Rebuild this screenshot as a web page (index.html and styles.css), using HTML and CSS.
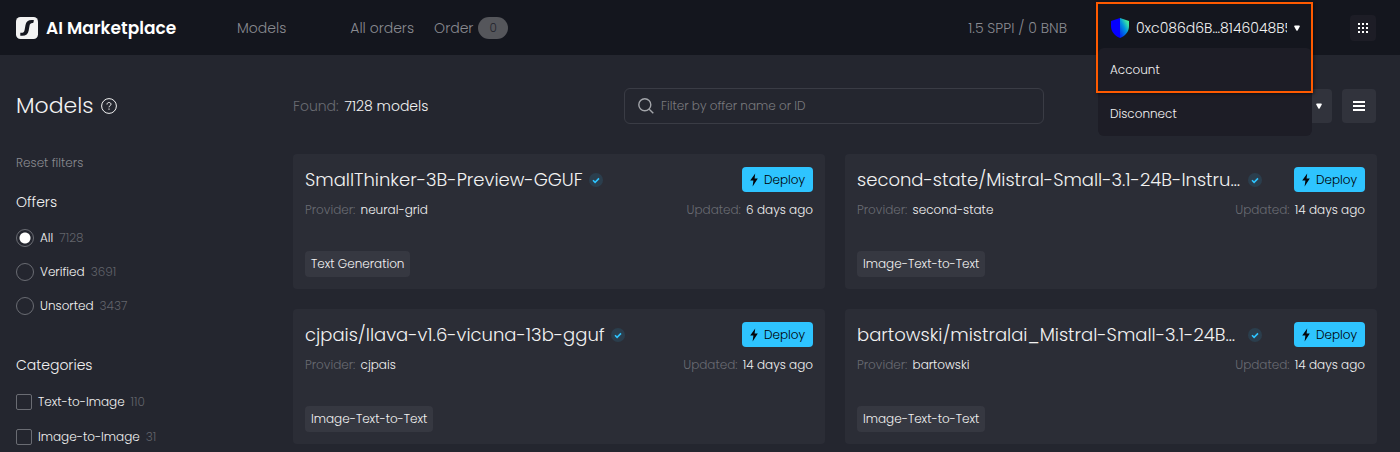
FILE: index.html
```
<!DOCTYPE html>
<html lang="en">
<head>
<meta charset="utf-8">
<title>AI Marketplace</title>
<link rel="stylesheet" href="styles.css">
</head>
<body>
<svg class="sprite" aria-hidden="true">
  <symbol id="check" viewBox="0 0 14 14"><circle cx="7" cy="7" r="7" fill="#2b3e4d"/><path d="M4 7.2l2.1 2.1L10 5.4" fill="none" stroke="#2ec4ff" stroke-width="1.6"/></symbol>
  <symbol id="bolt" viewBox="0 0 8 14"><path d="M5.2 0.4L0.2 7.6H3.4L2.6 13.6L7.8 5.6H4.6z" fill="#05070c"/></symbol>
  <symbol id="caret" viewBox="0 0 6 6"><path d="M1 0.5h4q1 0 .8 1L3.6 5.4q-.6.8-1.2 0L.2 1.500Q0 .5 1 .5z" fill="#fff"/></symbol>
</svg>
<header class="header">
  <a class="logo" href="#">
    <svg width="22" height="22" viewBox="0 0 22 22"><rect width="22" height="22" rx="4.500" fill="#f2f2f2"/><path d="M18 3.200C13 2.400 10.300 4 9.500 8L8.700 12.500C8.200 15.500 7 16 4.300 15.800V18.700C9.500 19.300 12 17.600 12.700 13.500L13.500 9C13.900 6.600 15 5.900 17.200 6.100Z" fill="#14161e"/></svg>
    <span>AI Marketplace</span>
  </a>
  <nav class="nav">
    <a class="nav-models" href="#">Models</a>
    <a href="#">All orders</a>
    <a class="nav-order" href="#">Order <span class="count">0</span></a>
  </nav>
  <span class="balance">1.5 SPPI / 0 BNB</span>
  <div class="wallet">
    <button class="wallet-toggle" type="button" aria-expanded="true">
      <svg width="18" height="20" viewBox="0 0 18 20"><defs><linearGradient id="shield" x1="1" y1="0" x2=".2" y2="1"><stop offset="0" stop-color="#48ff91"/><stop offset=".25" stop-color="#38dfa6"/><stop offset=".55" stop-color="#0094dd"/><stop offset="1" stop-color="#0030f0"/></linearGradient></defs><path d="M0 3L9 0V20C2.600 17.200 0 13 0 8z" fill="#0500ff"/><path d="M18 3L9 0V20C15.400 17.200 18 13 18 8z" fill="url(#shield)"/></svg>
      <span class="address">0xc086d6B...8146048B5</span>
      <svg width="6" height="6"><use href="#caret"/></svg>
    </button>
    <div class="menu">
      <a href="#">Account</a>
      <a href="#">Disconnect</a>
    </div>
    <div class="highlight"></div>
  </div>
  <button class="apps" type="button" aria-label="Apps">
    <svg width="10" height="10" viewBox="0 0 10 10" fill="#fff"><path d="M0 0h2v2H0zM4 0h2v2H4zM8 0h2v2H8zM0 4h2v2H0zM4 4h2v2H4zM8 4h2v2H8zM0 8h2v2H0zM4 8h2v2H4zM8 8h2v2H8z"/></svg>
  </button>
</header>
<main class="main">
  <aside class="sidebar">
    <h1>Models
      <svg width="16" height="16" viewBox="0 0 16 16" fill="none" stroke="#f2f2f2" stroke-width="1"><circle cx="8" cy="8" r="7.400"/><path d="M6 6.500C6 5.100 6.900 4.500 8 4.500s2 .7 2 1.800C10 7.700 8 7.700 8 9.300M8 10.500v1.300"/></svg>
    </h1>
    <button class="reset" type="button">Reset filters</button>
    <fieldset class="group offers">
      <legend>Offers</legend>
      <label><input type="radio" name="offer" checked>All <span class="num">7128</span></label>
      <label><input type="radio" name="offer">Verified <span class="num">3691</span></label>
      <label><input type="radio" name="offer">Unsorted <span class="num">3437</span></label>
    </fieldset>
    <fieldset class="group categories">
      <legend>Categories</legend>
      <label><input type="checkbox">Text-to-Image <span class="num">110</span></label>
      <label><input type="checkbox">Image-to-Image <span class="num">31</span></label>
    </fieldset>
  </aside>
  <section class="content">
    <div class="toolbar">
      <p class="found"><span class="dim">Found:</span> 7128 models</p>
      <label class="search">
        <svg width="16" height="16" viewBox="0 0 16 16" fill="none" stroke="#a3a5aa" stroke-width="1.400"><circle cx="6.800" cy="6.800" r="6"/><path d="M11.200 11.200L15.300 15.300"/></svg>
        <input type="text" placeholder="Filter by offer name or ID" aria-label="Filter by offer name or ID">
      </label>
      <div class="tools">
        <button class="sort" type="button" aria-label="Sort"><svg width="6" height="6"><use href="#caret"/></svg></button>
        <button class="view" type="button" aria-label="List view"><svg width="12" height="10" viewBox="0 0 12 10"><path d="M0 0h12v2H0zM0 4h12v2H0zM0 8h12v2H0z" fill="#fff"/></svg></button>
      </div>
    </div>
    <div class="cards">
      <article class="card">
        <div class="row"><h2>SmallThinker-3B-Preview-GGUF</h2><svg class="check" width="14" height="14"><use href="#check"/></svg><button class="deploy" type="button"><svg width="8" height="14"><use href="#bolt"/></svg>Deploy</button></div>
        <div class="meta"><span><span class="dim">Provider:</span> neural-grid</span><span><span class="dim">Updated:</span> 6 days ago</span></div>
        <span class="tag">Text Generation</span>
      </article>
      <article class="card">
        <div class="row"><h2>second-state/Mistral-Small-3.1-24B-Instruct-2503-GGUF</h2><svg class="check" width="14" height="14"><use href="#check"/></svg><button class="deploy" type="button"><svg width="8" height="14"><use href="#bolt"/></svg>Deploy</button></div>
        <div class="meta"><span><span class="dim">Provider:</span> second-state</span><span><span class="dim">Updated:</span> 14 days ago</span></div>
        <span class="tag">Image-Text-to-Text</span>
      </article>
      <article class="card">
        <div class="row"><h2>cjpais/llava-v1.6-vicuna-13b-gguf</h2><svg class="check" width="14" height="14"><use href="#check"/></svg><button class="deploy" type="button"><svg width="8" height="14"><use href="#bolt"/></svg>Deploy</button></div>
        <div class="meta"><span><span class="dim">Provider:</span> cjpais</span><span><span class="dim">Updated:</span> 14 days ago</span></div>
        <span class="tag">Image-Text-to-Text</span>
      </article>
      <article class="card">
        <div class="row"><h2>bartowski/mistralai_Mistral-Small-3.1-24B-Instruct-2503-GGUF</h2><svg class="check" width="14" height="14"><use href="#check"/></svg><button class="deploy" type="button"><svg width="8" height="14"><use href="#bolt"/></svg>Deploy</button></div>
        <div class="meta"><span><span class="dim">Provider:</span> bartowski</span><span><span class="dim">Updated:</span> 14 days ago</span></div>
        <span class="tag">Image-Text-to-Text</span>
      </article>
    </div>
  </section>
</main>
</body>
</html>
```
FILE: styles.css
```
* { box-sizing: border-box; }
body {
  margin: 0;
  background: #24262f;
  color: #f2f2f2;
  font: 300 12px/18px Poppins, Inter, "Open Sans", sans-serif;
}
button, input { font: inherit; color: inherit; }
button { border: 0; padding: 0; background: none; cursor: pointer; }
a { color: inherit; text-decoration: none; }
h1, h2, p { margin: 0; font-weight: 300; }
svg { flex: none; display: block; }
.sprite { position: absolute; width: 0; height: 0; }
.dim { color: #696b72; margin-right: 2px; }

.header {
  display: flex;
  align-items: center;
  height: 55px;
  padding: 0 24px 0 16px;
  background: #14161e;
  color: #8a8b91;
  font-size: 14px;
}
.logo {
  display: flex;
  align-items: center;
  gap: 8px;
  width: 221px;
  color: #fff;
  font-size: 17px;
  font-weight: 600;
}
.nav { display: flex; align-items: center; gap: 20px; }
.nav-models { margin-right: 44px; }
.nav-order { display: flex; align-items: center; gap: 5px; }
.count {
  padding: 2px 11px;
  border-radius: 11px;
  background: #55565b;
  color: #22232b;
  font-size: 12px;
}
.balance { margin-left: auto; }
.wallet {
  position: relative;
  width: 214px;
  margin: 0 38px 0 31px;
  color: #f2f2f2;
}
.wallet-toggle {
  display: flex;
  align-items: center;
  gap: 7px;
  width: 100%;
  height: 41px;
  padding: 0 12px 0 13px;
}
.address { flex: 1; min-width: 0; overflow: hidden; white-space: nowrap; text-align: left; }
.menu {
  position: absolute;
  top: 100%;
  left: 0;
  width: 100%;
  border-radius: 6px;
  background: #1d1d26;
  font-size: 12px;
  z-index: 1;
}
.menu a { display: block; padding: 13px 12px; }
.highlight {
  position: absolute;
  inset: -5px -1px -45px -2px;
  border: 2px solid #ff5a00;
  box-shadow: 1px 1px 3px #00000080;
  pointer-events: none;
  z-index: 2;
}
.apps {
  display: grid;
  place-items: center;
  width: 26px;
  height: 26px;
  border-radius: 4px;
  background: #1d1d26;
}

.main {
  display: grid;
  grid-template-columns: 277px minmax(0, 1fr);
  padding: 33px 23px 6px 16px;
}
h1 { display: flex; align-items: center; gap: 8px; font-size: 22px; line-height: 36px; }
.reset { display: block; margin-top: 30px; color: #8a8b91; }
.group { margin: 0; padding: 0; border: 0; }
.group legend { padding: 0; font-size: 14px; line-height: 20px; }
.group label { display: flex; align-items: center; gap: 6px; }
.num { color: #62646b; }
.offers { margin-top: 20px; }
.offers label { height: 18px; margin-top: 16px; }
.offers legend { margin-bottom: 1px; }
.categories { margin-top: 40px; }
.categories label { height: 18px; margin-top: 17px; }
.categories legend { margin-bottom: 1px; }
.group input {
  appearance: none;
  margin: 0;
  width: 18px;
  height: 18px;
  border: 1px solid #6a6c73;
  border-radius: 50%;
}
.group input:checked { background: radial-gradient(circle, #fff 5px, transparent 6px); }
.categories input { width: 16px; height: 16px; border-radius: 2px; }

.toolbar {
  display: grid;
  grid-template-columns: 331px 420px minmax(0, 1fr);
  align-items: center;
  margin-bottom: 30px;
}
.found { font-size: 14px; }
.search {
  display: flex;
  align-items: center;
  gap: 7px;
  height: 36px;
  padding: 0 13px;
  border: 1px solid #3a3c45;
  border-radius: 6px;
}
.search input { flex: 1; min-width: 0; padding: 0; border: 0; outline: 0; background: none; }
.search input::placeholder { color: #7a7a7e; opacity: 1; }
.tools { display: flex; justify-content: flex-end; gap: 10px; padding-right: 1px; }
.sort, .view {
  display: flex;
  align-items: center;
  justify-content: center;
  width: 34px;
  height: 34px;
  border-radius: 4px;
  background: #31333c;
}
.sort { width: 120px; justify-content: flex-end; padding-right: 10px; }

.cards { display: grid; grid-template-columns: repeat(2, minmax(0, 1fr)); gap: 20px; align-items: start; }
.card {
  padding: 13px 12px 12px;
  border-radius: 4px;
  background: #2b2d36;
}
.row { display: flex; align-items: center; }
.row h2 {
  min-width: 0;
  overflow: hidden;
  white-space: nowrap;
  text-overflow: ellipsis;
  font-size: 18px;
  line-height: 25px;
}
.check { margin: 0 32px 0 6px; }
.deploy {
  display: flex;
  align-items: center;
  flex: none;
  gap: 6px;
  height: 25px;
  margin-left: auto;
  padding: 0 8px;
  border-radius: 4px;
  background: #2ec4ff;
  color: #000;
}
.meta { display: flex; justify-content: space-between; margin: 9px 0 32px; }
.tag {
  display: inline-block;
  padding: 4px 6px;
  border-radius: 4px;
  background: #363841;
}
```
